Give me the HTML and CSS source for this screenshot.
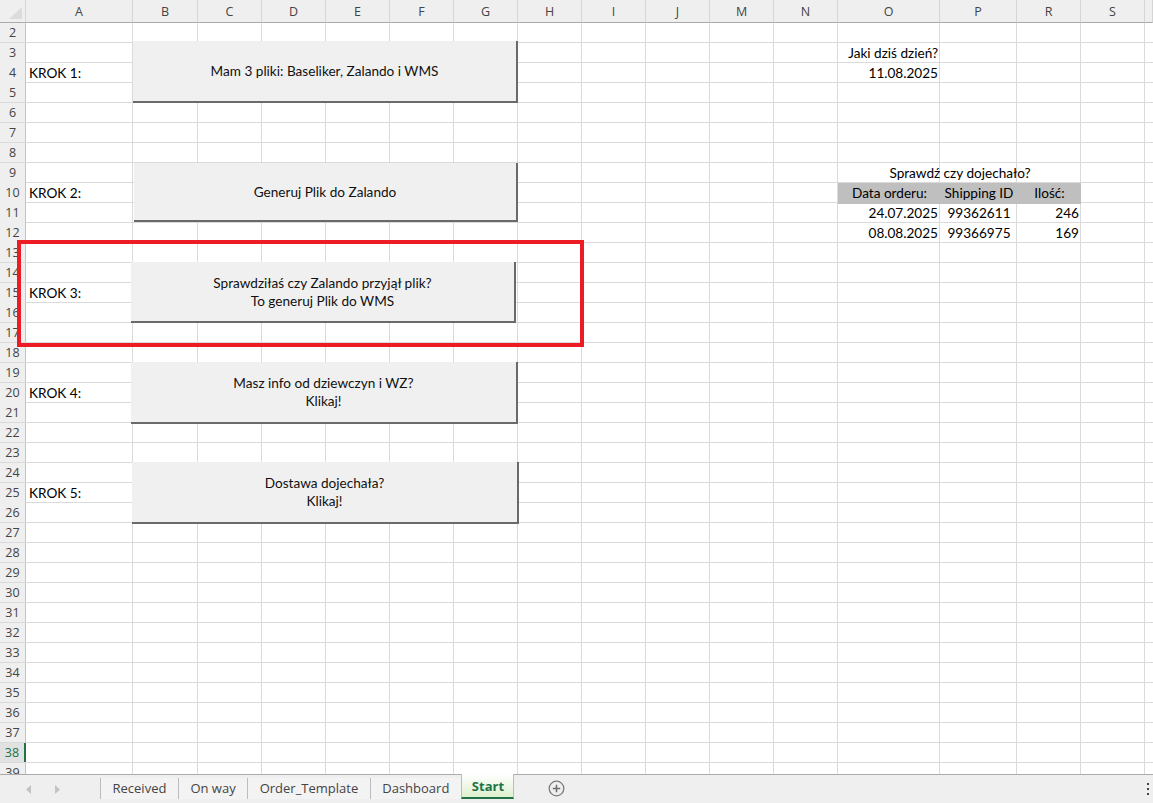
FILE: index.html
```html
<!DOCTYPE html>
<html lang="pl">
<head>
<meta charset="utf-8">
<title>Start</title>
<link rel="stylesheet" href="styles.css">
</head>
<body>
<div class="sheet">
  <div class="hdr-row">
    <div class="corner"><svg class="corner-tri" width="13" height="12" viewBox="0 0 13 12"><polygon points="0,12 13,12 13,0" fill="#dcdcdc"/></svg></div>
    <div>A</div><div>B</div><div>C</div><div>D</div><div>E</div><div>F</div><div>G</div><div>H</div><div>I</div><div>J</div><div>M</div><div>N</div><div>O</div><div>P</div><div>R</div><div>S</div><div></div>
  </div>
  <div class="rows">
    <div class="row"><span class="rh">2</span></div>
    <div class="row"><span class="rh">3</span><span class="c o right">Jaki dziś dzień?</span></div>
    <div class="row"><span class="rh">4</span><span class="c a">KROK 1:</span><span class="c o right">11.08.2025</span></div>
    <div class="row"><span class="rh">5</span></div>
    <div class="row"><span class="rh">6</span></div>
    <div class="row"><span class="rh">7</span></div>
    <div class="row"><span class="rh">8</span></div>
    <div class="row"><span class="rh">9</span><span class="c o-r center">Sprawdź czy dojechało?</span></div>
    <div class="row"><span class="rh">10</span><span class="c a">KROK 2:</span><span class="c o center fill">Data orderu:</span><span class="c p center fill">Shipping ID</span><span class="c r center fill">Ilość:</span></div>
    <div class="row"><span class="rh">11</span><span class="c o right">24.07.2025</span><span class="c p center">99362611</span><span class="c r right">246</span></div>
    <div class="row"><span class="rh">12</span><span class="c o right">08.08.2025</span><span class="c p center">99366975</span><span class="c r right">169</span></div>
    <div class="row"><span class="rh">13</span></div>
    <div class="row"><span class="rh">14</span></div>
    <div class="row"><span class="rh">15</span><span class="c a">KROK 3:</span></div>
    <div class="row"><span class="rh">16</span></div>
    <div class="row"><span class="rh">17</span></div>
    <div class="row"><span class="rh">18</span></div>
    <div class="row"><span class="rh">19</span></div>
    <div class="row"><span class="rh">20</span><span class="c a">KROK 4:</span></div>
    <div class="row"><span class="rh">21</span></div>
    <div class="row"><span class="rh">22</span></div>
    <div class="row"><span class="rh">23</span></div>
    <div class="row"><span class="rh">24</span></div>
    <div class="row"><span class="rh">25</span><span class="c a">KROK 5:</span></div>
    <div class="row"><span class="rh">26</span></div>
    <div class="row"><span class="rh">27</span></div>
    <div class="row"><span class="rh">28</span></div>
    <div class="row"><span class="rh">29</span></div>
    <div class="row"><span class="rh">30</span></div>
    <div class="row"><span class="rh">31</span></div>
    <div class="row"><span class="rh">32</span></div>
    <div class="row"><span class="rh">33</span></div>
    <div class="row"><span class="rh">34</span></div>
    <div class="row"><span class="rh">35</span></div>
    <div class="row"><span class="rh">36</span></div>
    <div class="row"><span class="rh">37</span></div>
    <div class="row"><span class="rh sel">38</span></div>
    <div class="row"><span class="rh">39</span></div>
  </div>

  <div class="btn b1">Mam 3 pliki: Baseliker, Zalando i WMS</div>
  <div class="btn b2">Generuj Plik do Zalando</div>
  <div class="btn b3">Sprawdziłaś czy Zalando przyjął plik?<br>To generuj Plik do WMS</div>
  <div class="btn b4">Masz info od dziewczyn i WZ?<br>Klikaj!</div>
  <div class="btn b5">Dostawa dojechała?<br>Klikaj!</div>
  <div class="redbox"></div>
</div>

<div class="tabbar">
  <div class="nav">
    <svg width="6" height="9" viewBox="0 0 6 9"><polygon points="5,0 5,9 0,4.5" fill="#c3c3c3"/></svg>
    <svg width="6" height="9" viewBox="0 0 6 9"><polygon points="1,0 1,9 6,4.5" fill="#c3c3c3"/></svg>
  </div>
  <div class="tabs">
    <div class="tab">Received</div>
    <div class="tab">On way</div>
    <div class="tab">Order_Template</div>
    <div class="tab">Dashboard</div>
    <div class="tab active">Start</div>
  </div>
  <div class="add">
    <svg width="17" height="17" viewBox="0 0 17 17"><circle cx="8.5" cy="8.5" r="7.3" fill="none" stroke="#7b7b7b" stroke-width="1.3"/><path d="M8.5 4.8v7.4M4.8 8.5h7.4" stroke="#6b6b6b" stroke-width="1.5"/></svg>
  </div>
  <div class="spacer"></div>
  <div class="more">
    <svg width="3" height="12" viewBox="0 0 3 12"><rect x="0" y="0" width="2" height="2" fill="#444"/><rect x="0" y="5" width="2" height="2" fill="#444"/><rect x="0" y="10" width="2" height="2" fill="#444"/></svg>
  </div>
</div>
</body>
</html>
```
FILE: styles.css
```css
html, body {
  margin: 0;
  padding: 0;
}
body {
  width: 1153px;
  height: 803px;
  overflow: hidden;
  background: #ffffff;
  font-family: Lato, "Liberation Sans", sans-serif;
}

.sheet {
  --cols: 26px 107px 65px 64px 64px 64px 64px 64px 64px 64px 64px 64px 64px 102px 77px 64px 64px 1fr;
  position: relative;
  height: 774px;
  overflow: hidden;
}

/* column headers */
.hdr-row {
  display: grid;
  grid-template-columns: var(--cols);
  height: 23px;
}
.hdr-row > div {
  box-sizing: border-box;
  background: #efefef;
  border-right: 1px solid #d5d5d5;
  border-bottom: 1px solid #ababab;
  display: flex;
  align-items: center;
  justify-content: center;
  font-family: "Open Sans", "Noto Sans", sans-serif;
  font-size: 12.5px;
  color: #444;
}
.hdr-row > .corner {
  justify-content: flex-end;
  align-items: flex-end;
  padding: 0 3px 3px 0;
}
.corner-tri {
  display: block;
}

/* rows */
.rows {
  --g: linear-gradient(#dadada, #dadada);
  background-image: var(--g), var(--g), var(--g), var(--g), var(--g), var(--g), var(--g), var(--g),
                    var(--g), var(--g), var(--g), var(--g), var(--g), var(--g), var(--g), var(--g);
  background-position: 132px 0, 197px 0, 261px 0, 325px 0, 389px 0, 453px 0, 517px 0, 581px 0,
                       645px 0, 709px 0, 773px 0, 837px 0, 939px 0, 1016px 0, 1080px 0, 1144px 0;
  background-size: 1px 100%;
  background-repeat: no-repeat;
}
.row {
  display: grid;
  grid-template-columns: var(--cols);
  height: 20px;
  box-sizing: border-box;
  border-bottom: 1px solid #dadada;
}
.rh {
  grid-column: 1;
  box-sizing: border-box;
  background: #efefef;
  border-right: 1px solid #c4c4c4;
  font-family: "Open Sans", "Noto Sans", sans-serif;
  font-size: 12.5px;
  line-height: 19px;
  color: #444;
  text-align: center;
}
.rh.sel {
  background: #e1e1e1;
  color: #217346;
  border-right: 2px solid #217346;
}

.c {
  font-size: 13.6px;
  line-height: 20px;
  color: #000;
  white-space: nowrap;
  padding: 0 2px 0 3px;
  overflow: visible;
}
.c.a { grid-column: 2; }
.c.o { grid-column: 14; }
.c.p { grid-column: 15; }
.c.r { grid-column: 16; }
.c.o-r { grid-column: 14 / 17; }
.right { text-align: right; }
.center { text-align: center; }
.fill {
  background: #bfbfbf;
  box-shadow: 0 1px 0 #bfbfbf;
}

/* form buttons drawn over the grid */
.btn {
  position: absolute;
  box-sizing: border-box;
  background: #f0f0f0;
  border-right: 2px solid #6a6a6a;
  border-bottom: 2px solid #6a6a6a;
  display: flex;
  align-items: center;
  justify-content: center;
  text-align: center;
  font-size: 13.6px;
  line-height: 18px;
  color: #111;
}
.b1 { left: 133px; top: 41px; width: 385px; height: 62px; }
.b2 { left: 134px; top: 163px; width: 384px; height: 59px; }
.b3 { left: 131px; top: 262px; width: 385px; height: 61px; }
.b4 { left: 131px; top: 362px; width: 387px; height: 62px; }
.b5 { left: 132px; top: 462px; width: 387px; height: 62px; }

.redbox {
  position: absolute;
  left: 17px;
  top: 240px;
  width: 567px;
  height: 107px;
  box-sizing: border-box;
  border: 4px solid #ed1c24;
}

/* sheet tabs */
.tabbar {
  height: 29px;
  box-sizing: border-box;
  border-top: 1px solid #ababab;
  background: #efefef;
  display: flex;
  font-family: "Open Sans", "Noto Sans", sans-serif;
  font-size: 13px;
  color: #444;
}
.nav {
  width: 100px;
  display: flex;
  align-items: center;
  gap: 22px;
  padding-left: 26px;
  box-sizing: border-box;
}
.nav svg { display: block; }
.tabs {
  display: flex;
  align-items: flex-start;
  height: 25px;
}
.tab {
  height: 21px;
  margin-top: 3px;
  box-sizing: border-box;
  border-left: 1px solid #bcbcbc;
  padding: 0 11.5px 2px;
  display: flex;
  align-items: center;
  background: #f3f3f3;
}
.tab.active {
  height: 25px;
  margin-top: -1px;
  padding: 0 9px 0 10px;
  border-right: 1px solid #bcbcbc;
  border-bottom: 2px solid #217346;
  background: linear-gradient(#ffffff, #def0cf);
  color: #217346;
  font-weight: 700;
}
.add {
  width: 84px;
  display: flex;
  align-items: center;
  justify-content: center;
  padding-bottom: 1px;
}
.add svg { display: block; }
.spacer { flex: 1; }
.more {
  width: 6px;
  display: flex;
  align-items: center;
}
.more svg { display: block; }
```
